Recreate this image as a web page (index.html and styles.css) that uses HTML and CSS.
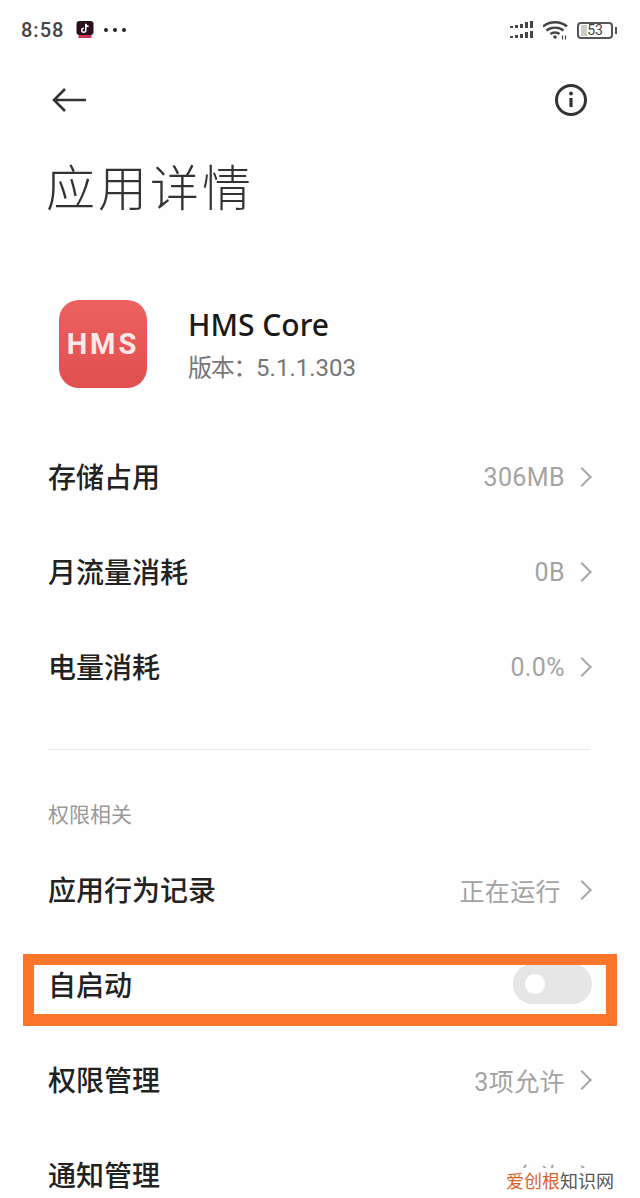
FILE: index.html
```html
<!DOCTYPE html>
<html lang="zh-CN">
<head>
  <meta charset="UTF-8">
  <meta name="viewport" content="width=device-width, initial-scale=1.0">
  <title>应用详情</title>
  <link rel="stylesheet" href="styles.css">
</head>
<body>
  <div class="phone">
    <!-- Status bar -->
    <div class="status-bar">
      <div class="status-left">
        <span class="clock">8:58</span>
        <svg class="tiktok" width="18" height="18" viewBox="0 0 18 18">
          <rect x="0.5" y="0" width="17" height="14" rx="3" fill="#2a0f1c"/>
          <rect x="2.5" y="14" width="13" height="3" fill="#c8344f"/>
          <path d="M9.8 2.800v6.400a2 2 0 1 1-2-2M9.800 2.800c.3 1.600 1.200 2.400 2.800 2.600" fill="none" stroke="#fff" stroke-width="1.500"/>
        </svg>
        <span class="dots"><i></i><i></i><i></i></span>
      </div>
      <div class="status-right">
        <svg width="25" height="20" viewBox="0 0 25 20" fill="#444">
          <rect x="0" y="6" width="3" height="2"/><rect x="5" y="5" width="3" height="3"/><rect x="10" y="4" width="3" height="4"/><rect x="15" y="2" width="3" height="6"/><rect x="20" y="1" width="3" height="7"/>
          <rect x="0" y="16" width="3" height="2"/><rect x="5" y="15" width="3" height="3"/><rect x="10" y="14" width="3" height="4"/><rect x="15" y="12" width="3" height="6"/><rect x="20" y="11" width="3" height="7"/>
        </svg>
        <svg width="26" height="20" viewBox="0 0 26 20" fill="none" stroke="#444" stroke-width="2.400">
          <path d="M0 6.500C6.500 .8 17.500 .8 24 6.500"/>
          <path d="M3.500 10.500c4.500-3.800 12.500-3.800 17 0"/>
          <path d="M7.500 14c2.400-2 6.600-2 9 0"/>
          <circle cx="12" cy="17" r="1.800" fill="#444" stroke="none"/>
          <path d="M19.500 15.500v4M22.500 15.500v4" stroke-width="1.200"/>
        </svg>
        <div class="battery">
          <div class="battery-body"><span class="battery-level"></span><span class="battery-num">53</span></div>
          <span class="battery-tip"></span>
        </div>
      </div>
    </div>

    <!-- Top nav -->
    <div class="nav">
      <svg width="36" height="28" viewBox="0 0 36 28" fill="none" stroke="#333" stroke-width="2.600">
        <path d="M35 14H3M14 3L3 14l11 11"/>
      </svg>
      <svg width="34" height="34" viewBox="0 0 34 34" fill="none" stroke="#333">
        <circle cx="17" cy="17" r="14.500" stroke-width="3"/>
        <circle cx="17" cy="10.500" r="1.900" fill="#333" stroke="none"/>
        <path d="M17 15v9" stroke-width="3.200"/>
      </svg>
    </div>

    <h1 class="title">应用详情</h1>

    <div class="app-info">
      <div class="app-icon">HMS</div>
      <div class="app-text">
        <div class="app-name">HMS Core</div>
        <div class="app-version"><span class="version-label">版本：</span>5.1.1.303</div>
      </div>
    </div>

    <div class="list list-first">
      <div class="row">
        <span class="row-label">存储占用</span>
        <span class="row-value">306MB<i class="chevron"></i></span>
      </div>
      <div class="row">
        <span class="row-label">月流量消耗</span>
        <span class="row-value">0B<i class="chevron"></i></span>
      </div>
      <div class="row">
        <span class="row-label">电量消耗</span>
        <span class="row-value">0.0%<i class="chevron"></i></span>
      </div>
    </div>

    <div class="divider"></div>
    <div class="section-label">权限相关</div>

    <div class="list">
      <div class="row">
        <span class="row-label">应用行为记录</span>
        <span class="row-value"><span class="value-running">正在运行</span><i class="chevron"></i></span>
      </div>
      <div class="row row-marked">
        <span class="row-label">自启动</span>
        <span class="toggle"><i class="knob"></i></span>
      </div>
      <div class="row">
        <span class="row-label">权限管理</span>
        <span class="row-value">3项允许<i class="chevron"></i></span>
      </div>
      <div class="row">
        <span class="row-label">通知管理</span>
        <span class="row-value">允许<i class="chevron"></i></span>
      </div>
    </div>

    <!-- Site watermark -->
    <div class="watermark"><span class="wm-orange">爱创根</span>知识网</div>
  </div>
</body>
</html>
```

FILE: styles.css
```css
/* Reset styles */
* {
  box-sizing: border-box;
  margin: 0;
  padding: 0;
}

body {
  background-color: #fefefe;
  font-family: "Noto Sans CJK SC", "Noto Sans", sans-serif;
}

.phone {
  position: relative;
  width: 640px;
  height: 1198px;
  overflow: hidden;
}

/* Status bar */
.status-bar {
  display: flex;
  justify-content: space-between;
  align-items: center;
  height: 20px;
  margin-top: 20px;
  padding: 0 23px 0 21px;
}

.status-left {
  display: flex;
  align-items: center;
}

.clock {
  font-family: Roboto, sans-serif;
  font-size: 20px;
  font-weight: 500;
  letter-spacing: 1px;
  color: #444;
  width: 55px;
}

.dots {
  display: flex;
  gap: 5px;
  margin-left: 10px;
}

.dots i {
  width: 4px;
  height: 4px;
  border-radius: 50%;
  background-color: #222;
}

.status-right {
  display: flex;
  align-items: center;
  gap: 8px;
}

.battery {
  display: flex;
  align-items: center;
  gap: 2px;
}

.battery-body {
  position: relative;
  width: 36px;
  height: 17px;
  border: 2px solid #555;
  border-radius: 4px;
  text-align: center;
}

.battery-level {
  position: absolute;
  left: 2px;
  top: 1px;
  bottom: 1px;
  width: 6px;
  background-color: #ccc;
}

.battery-num {
  position: relative;
  display: block;
  font-family: Roboto, sans-serif;
  font-size: 14px;
  line-height: 13px;
  color: #444;
}

.battery-tip {
  width: 2px;
  height: 7px;
  background-color: #555;
}

/* Top nav */
.nav {
  display: flex;
  justify-content: space-between;
  align-items: center;
  height: 34px;
  margin-top: 43px;
  padding: 0 52px 0 51px;
}

.title {
  margin: 38px 0 0 46px;
  font-size: 49px;
  font-weight: 300;
  line-height: 60px;
  letter-spacing: 3px;
  color: #333;
}

/* App info */
.app-info {
  display: flex;
  align-items: center;
  gap: 41px;
  margin: 85px 0 0 59px;
}

.app-icon {
  width: 88px;
  height: 88px;
  border-radius: 20px;
  background: linear-gradient(#ec6160, #e14f4f);
  color: #fbe9e7;
  font-family: Roboto, sans-serif;
  font-size: 29px;
  font-weight: 700;
  letter-spacing: 3px;
  line-height: 88px;
  text-align: center;
}

.app-text {
  padding-top: 2px;
}

.app-name {
  font-family: "Noto Sans", sans-serif;
  font-size: 30px;
  font-weight: 500;
  line-height: 40px;
  color: #1a1a1a;
}

.app-version {
  margin-top: 5px;
  font-family: Roboto, "Noto Sans CJK SC", sans-serif;
  font-size: 24px;
  line-height: 36px;
  color: #777;
}

.version-label {
  letter-spacing: -1.300px;
}

/* Rows */
.list {
  display: flex;
  flex-direction: column;
}

.list-first {
  margin-top: 40px;
}

.row {
  display: flex;
  justify-content: space-between;
  align-items: center;
  height: 95px;
  padding: 0 48px;
}

.row-label {
  font-size: 28px;
  font-weight: 500;
  color: #222;
}

.row-value {
  display: flex;
  align-items: center;
  padding-top: 3px;
  font-family: Roboto, "Noto Sans CJK SC", sans-serif;
  font-size: 25px;
  letter-spacing: 0.400px;
  color: #a3a3a3;
}

.value-running {
  margin-right: 4px;
}

.chevron {
  width: 14px;
  height: 14px;
  margin: 0 3px 0 10px;
  border-top: 2px solid #a8a8a8;
  border-right: 2px solid #a8a8a8;
  transform: rotate(45deg);
}

.divider {
  height: 1px;
  margin: 36px 50px 0 48px;
  background-color: #e8e8e8;
}

.section-label {
  margin: 48px 0 0 48px;
  font-size: 21px;
  line-height: 30px;
  color: #999;
}

.section-label + .list {
  margin-top: 13px;
}

/* Orange marker drawn over the auto-start row */
.row-marked {
  position: relative;
}

.row-marked::after {
  content: "";
  position: absolute;
  box-sizing: border-box;
  left: 23px;
  right: 23px;
  top: 18px;
  height: 72px;
  border: solid #fb752a;
  border-width: 11px 11px 12px 11px;
}

.toggle {
  display: block;
  position: relative;
  width: 79px;
  height: 40px;
  margin-top: 1px;
  border-radius: 20px;
  background-color: #e6e6e6;
}

.knob {
  position: absolute;
  left: 12px;
  top: 10px;
  width: 20px;
  height: 20px;
  border-radius: 50%;
  background-color: #fff;
}

.watermark {
  position: absolute;
  right: 26px;
  bottom: 6px;
  font-size: 18px;
  line-height: 24px;
  color: #555;
  background-color: #fff;
}

.wm-orange {
  color: #d9622b;
}
```
